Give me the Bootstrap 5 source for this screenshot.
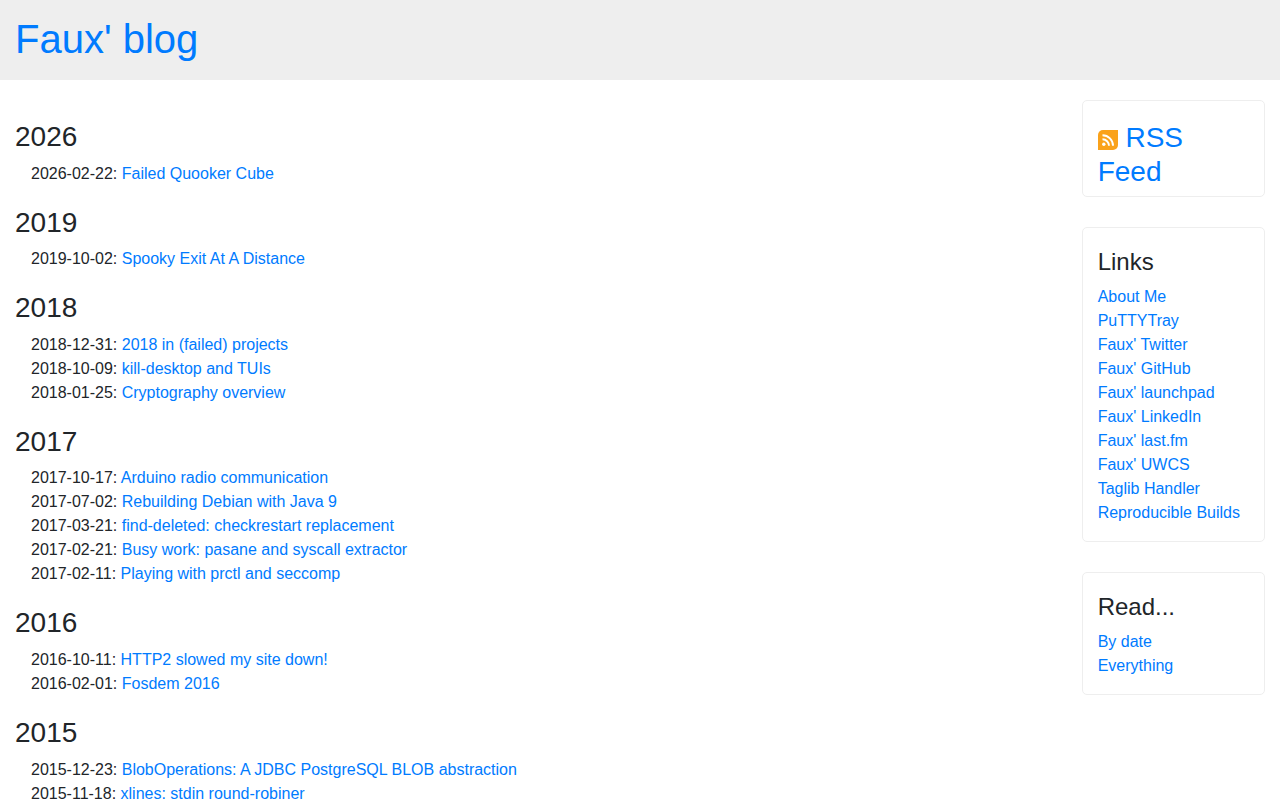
<!DOCTYPE html>
<html lang="en">
<head>
<meta charset="utf-8">
<meta name="viewport" content="width=device-width, initial-scale=1">
<title>Faux' blog</title>
<link href="https://cdn.jsdelivr.net/npm/bootstrap@5.3.0/dist/css/bootstrap.min.css" rel="stylesheet">
<style>
  body { font-family: "Liberation Sans", Arial, sans-serif; color: #212529; }
  a { color: #007bff; text-decoration: none; }
  a:hover { color: #0056b3; text-decoration: underline; }
  .site-header { background: #eee; padding: 15px 15px 17px; margin-bottom: 20px; }
  .site-header h1 { font-size: 40px; }
  .page-main, .page-columns { --bs-gutter-x: 30px; }
  .year-title { font-size: 28px; margin: 20px 0 8px; }
  .post-list { padding-left: 16px; margin-bottom: 0; }
  .side-box { border: 1px solid #eee; border-radius: 5px; padding: 19px 15px 0; margin-bottom: 30px; }
  .side-box h2 { font-size: 28px; padding-top: 1px; }
  .side-box h3 { font-size: 24px; padding-top: 1px; }
</style>
</head>
<body>
<header class="site-header">
  <h1 class="mb-0"><a href="#">Faux' blog</a></h1>
</header>
<div class="container-fluid page-main">
<div class="row page-columns">
  <main class="col-10">
    <h2 class="year-title">2026</h2>
    <ul class="post-list list-unstyled">
      <li>2026-02-22: <a href="#">Failed Quooker Cube</a></li>
    </ul>
    <h2 class="year-title">2019</h2>
    <ul class="post-list list-unstyled">
      <li>2019-10-02: <a href="#">Spooky Exit At A Distance</a></li>
    </ul>
    <h2 class="year-title">2018</h2>
    <ul class="post-list list-unstyled">
      <li>2018-12-31: <a href="#">2018 in (failed) projects</a></li>
      <li>2018-10-09: <a href="#">kill-desktop and TUIs</a></li>
      <li>2018-01-25: <a href="#">Cryptography overview</a></li>
    </ul>
    <h2 class="year-title">2017</h2>
    <ul class="post-list list-unstyled">
      <li>2017-10-17: <a href="#">Arduino radio communication</a></li>
      <li>2017-07-02: <a href="#">Rebuilding Debian with Java 9</a></li>
      <li>2017-03-21: <a href="#">find-deleted: checkrestart replacement</a></li>
      <li>2017-02-21: <a href="#">Busy work: pasane and syscall extractor</a></li>
      <li>2017-02-11: <a href="#">Playing with prctl and seccomp</a></li>
    </ul>
    <h2 class="year-title">2016</h2>
    <ul class="post-list list-unstyled">
      <li>2016-10-11: <a href="#">HTTP2 slowed my site down!</a></li>
      <li>2016-02-01: <a href="#">Fosdem 2016</a></li>
    </ul>
    <h2 class="year-title">2015</h2>
    <ul class="post-list list-unstyled">
      <li>2015-12-23: <a href="#">BlobOperations: A JDBC PostgreSQL BLOB abstraction</a></li>
      <li>2015-11-18: <a href="#">xlines: stdin round-robiner</a></li>
    </ul>
  </main>
  <aside class="col-2">
    <section class="side-box">
      <h2><a href="#"><svg width="20" height="20" viewBox="0 0 20 20" aria-hidden="true"><path fill="#faa21b" d="M5 0H20V15a5 5 0 0 1-5 5H0V5a5 5 0 0 1 5-5z"/><circle cx="5.800" cy="14.300" r="1.700" fill="#fff"/><path fill="none" stroke="#fff" stroke-width="1.900" d="M4.500 9.300a6.500 6.500 0 0 1 6.500 6.500M4.500 5.200a10.500 10.500 0 0 1 10.500 10.600"/></svg> RSS Feed</a></h2>
    </section>
    <section class="side-box">
      <h3>Links</h3>
      <ul class="list-unstyled">
        <li><a href="#">About Me</a></li>
        <li><a href="#">PuTTYTray</a></li>
        <li><a href="#">Faux' Twitter</a></li>
        <li><a href="#">Faux' GitHub</a></li>
        <li><a href="#">Faux' launchpad</a></li>
        <li><a href="#">Faux' LinkedIn</a></li>
        <li><a href="#">Faux' last.fm</a></li>
        <li><a href="#">Faux' UWCS</a></li>
        <li><a href="#">Taglib Handler</a></li>
        <li><a href="#">Reproducible Builds</a></li>
      </ul>
    </section>
    <section class="side-box">
      <h3>Read...</h3>
      <ul class="list-unstyled">
        <li><a href="#">By date</a></li>
        <li><a href="#">Everything</a></li>
      </ul>
    </section>
  </aside>
</div>
</div>
<script src="https://cdn.jsdelivr.net/npm/bootstrap@5.3.0/dist/js/bootstrap.bundle.min.js"></script>
</body>
</html>
